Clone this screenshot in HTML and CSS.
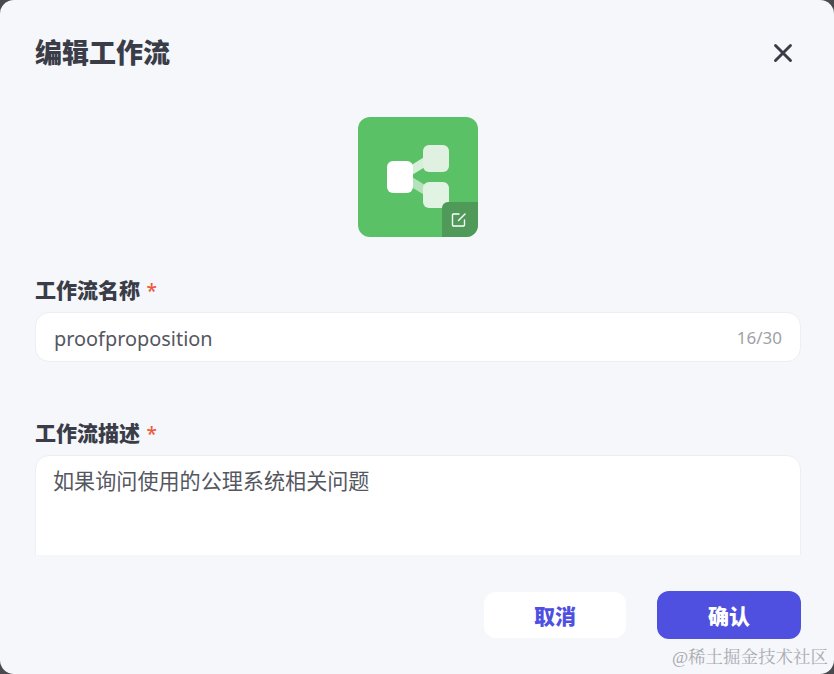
FILE: index.html
```html
<!DOCTYPE html>
<html lang="zh-Hans">
<head>
  <meta charset="UTF-8" />
  <title>编辑工作流</title>
  <link rel="stylesheet" href="styles.css">
</head>
<body>

<div class="dialog">
  <div class="dialog-header">
    <h2 class="dialog-title">编辑工作流</h2>
    <button class="close-btn" aria-label="关闭">
      <svg width="20" height="20" viewBox="0 0 20 20"><path d="M2.5 2.5 17.5 17.5M17.5 2.5 2.5 17.5" stroke="#3a3d48" stroke-width="2.9" stroke-linecap="round" fill="none"/></svg>
    </button>
  </div>

  <div class="dialog-body">
    <div class="avatar">
      <svg class="avatar-icon" width="64" height="64" viewBox="0 0 64 64">
        <path d="M24 26 42 15" stroke="#fff" stroke-opacity="0.75" stroke-width="9" fill="none"/>
        <path d="M24 36 42 47" stroke="#fff" stroke-opacity="0.55" stroke-width="9" fill="none"/>
        <rect x="1" y="16" width="26" height="32" rx="6" fill="#fff"/>
        <rect x="37" y="0" width="26" height="27" rx="6" fill="#e1f1e1"/>
        <rect x="37" y="37" width="26" height="26" rx="6" fill="#e1f3e3"/>
      </svg>
      <div class="avatar-edit">
        <svg width="16" height="16" viewBox="0 0 16 16" fill="none" stroke="#fff" stroke-width="1.4" stroke-linecap="round" stroke-linejoin="round"><path d="M8 2H2.4a.9.9 0 0 0-.9.9v10.2c0 .5.4.9.9.9h10.2c.5 0 .9-.4.9-.9V8"/><path d="M7.5 8.5 14 2"/></svg>
      </div>
    </div>

    <div class="field field-name">
      <label class="field-label">工作流名称 <span class="required">*</span></label>
      <div class="input-box">
        <span class="input-value">proofproposition</span>
        <span class="input-count">16/30</span>
      </div>
    </div>

    <div class="field">
      <label class="field-label">工作流描述 <span class="required">*</span></label>
      <div class="textarea-box">如果询问使用的公理系统相关问题</div>
    </div>
  </div>

  <div class="dialog-footer">
    <button class="btn btn-cancel">取消</button>
    <button class="btn btn-ok">确认</button>
  </div>

  <div class="watermark">@稀土掘金技术社区</div>
</div>

</body>
</html>
```

FILE: styles.css
```css
* {
  box-sizing: border-box;
}
html, body {
  margin: 0;
  padding: 0;
  height: 100%;
  overflow: hidden;
}
body {
  background: #4a4a4e;
  font-family: "Noto Sans", "Noto Sans CJK SC", sans-serif;
  color: #3a3d48;
}
.dialog {
  position: relative;
  width: 834px;
  height: 674px;
  background: #f5f7fb;
  border-radius: 14px;
  display: flex;
  flex-direction: column;
}
.dialog-header {
  display: flex;
  justify-content: space-between;
  align-items: center;
  padding: 33px 41px 0 35px;
  height: 73px;
}
.dialog-title {
  margin: 0;
  font-size: 27px;
  line-height: 40px;
  font-weight: 900;
  color: #3a3d48;
}
.close-btn {
  display: flex;
  padding: 0;
  border: none;
  background: none;
}
.dialog-body {
  height: 482px;
  padding: 44px 33px 0 35px;
  overflow: hidden;
}
.avatar {
  position: relative;
  width: 120px;
  height: 120px;
  margin: 0 auto 0 323px;
  background: #5ac166;
  border-radius: 12px;
  overflow: hidden;
  display: flex;
  align-items: center;
  justify-content: center;
}
.avatar-edit {
  position: absolute;
  right: 0;
  bottom: 0;
  width: 36px;
  height: 35px;
  padding-right: 2px;
  background: #4f9a58;
  border-top-left-radius: 6px;
  display: flex;
  align-items: center;
  justify-content: center;
}
.field-name {
  margin-top: 37px;
  margin-bottom: 55px;
}
.field-label {
  display: block;
  height: 32px;
  font-size: 21px;
  line-height: 32px;
  font-weight: 900;
  margin-bottom: 6px;
}
.required {
  color: #ee5a3c;
  font-size: 19px;
  line-height: 1;
  font-weight: 500;
  margin-left: 1px;
}
.input-box {
  height: 50px;
  background: #fff;
  border: 1px solid #eceef3;
  border-radius: 14px;
  display: flex;
  align-items: center;
  justify-content: space-between;
  padding: 0 18px;
}
.input-value {
  font-size: 19.9px;
  margin-top: 2px;
  color: #55575f;
}
.input-count {
  font-size: 17px;
  color: #a0a1a6;
}
.textarea-box {
  height: 140px;
  background: #fff;
  border: 1px solid #eceef3;
  border-radius: 14px;
  padding: 7px 17px;
  font-size: 21.1px;
  line-height: 36px;
  color: #55575f;
}
.dialog-footer {
  display: flex;
  justify-content: flex-end;
  align-items: center;
  gap: 31px;
  padding: 36px 33px 0 0;
}
.btn {
  font-family: inherit;
  font-size: 21px;
  font-weight: 900;
  border-radius: 12px;
  border: none;
  padding: 0;
}
.btn-cancel {
  width: 142px;
  height: 46px;
  background: #fff;
  color: #4f50e0;
}
.btn-ok {
  width: 144px;
  height: 48px;
  background: #4f50e0;
  color: #fff;
}
.watermark {
  position: absolute;
  right: 6px;
  bottom: 3px;
  font-family: "Liberation Serif", "Noto Serif CJK SC", "Noto Sans CJK SC", serif;
  font-size: 17.5px;
  line-height: 28px;
  color: #a9abb0;
}
```
